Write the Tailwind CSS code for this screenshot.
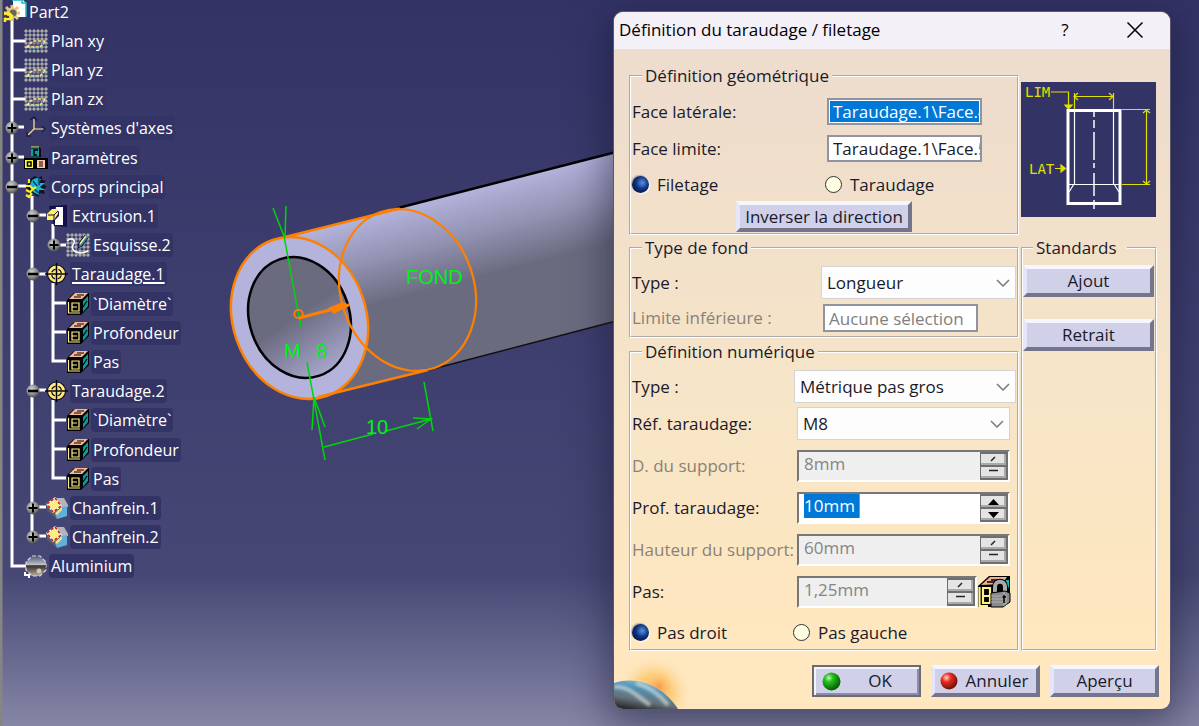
<!DOCTYPE html>
<html lang="fr">
<head>
<meta charset="utf-8">
<title>Part2 - Définition du taraudage / filetage</title>
<script src="https://cdn.jsdelivr.net/npm/@tailwindcss/browser@4"></script>
</head>
<body class="relative h-screen min-h-[726px] overflow-hidden bg-linear-to-b from-[#333366] from-0% via-[#474775] via-79% to-[#8686a6] to-100% font-['Open_Sans',sans-serif] text-[16px] text-[#1a1a2a]">

<!-- Icon definitions -->
<svg class="absolute size-0" aria-hidden="true">
  <defs>
    <radialGradient id="gNode" cx=".4" cy=".35" r=".7"><stop offset="0" stop-color="#d0d0d0"/><stop offset=".6" stop-color="#8a8a8a"/><stop offset="1" stop-color="#444"/></radialGradient>
    <radialGradient id="gGreen" cx=".35" cy=".3" r=".75"><stop offset="0" stop-color="#c8f5b8"/><stop offset=".3" stop-color="#24c41c"/><stop offset="1" stop-color="#035003"/></radialGradient>
    <radialGradient id="gRed" cx=".35" cy=".3" r=".75"><stop offset="0" stop-color="#ffd8c8"/><stop offset=".35" stop-color="#ee2a20"/><stop offset="1" stop-color="#5c1008"/></radialGradient>
    <linearGradient id="gAlu" x1="0" y1="0" x2="0" y2="1"><stop offset="0" stop-color="#55556a"/><stop offset=".3" stop-color="#9aa0b8"/><stop offset=".5" stop-color="#d8d4b8"/><stop offset=".55" stop-color="#4a3c34"/><stop offset="1" stop-color="#b8b0a0"/></linearGradient>
    <pattern id="pDots" width="4" height="4" patternUnits="userSpaceOnUse"><circle cx="2" cy="2" r="1.500" fill="#b4b4b4"/><path d="M0 2H4M2 0V4" stroke="#a0a0a0" stroke-width=".6"/></pattern>
  </defs>
  <symbol id="plus" viewBox="0 0 14 14"><circle cx="7" cy="7" r="6.500" fill="url(#gNode)"/><path d="M2.500 7H11.500M7 2.500V11.500" stroke="#000" stroke-width="2"/></symbol>
  <symbol id="minus" viewBox="0 0 14 14"><circle cx="7" cy="7" r="6.500" fill="url(#gNode)"/><path d="M2 7H12" stroke="#000" stroke-width="2.500"/></symbol>
  <symbol id="plane" viewBox="0 0 24 24"><rect width="24" height="24" fill="url(#pDots)"/><path d="M3 18L9 12H22L16 18Z" fill="#5a5a78" fill-opacity=".5" stroke="#ffe98a" stroke-width="1.500" stroke-dasharray="3 1.500"/><path d="M6 19H17L22 13" stroke="#4bbcae" stroke-dasharray="3 2" fill="none"/></symbol>
  <symbol id="axis" viewBox="0 0 24 24"><path d="M10 3V13L4 19M10 13H21" stroke="#ffe98a" stroke-width="1.200" fill="none"/><path d="M6 4L10 1L13 5M18 10L21 13L18 16M3 16L3 20L7 20" stroke="#1c1c50" stroke-width="1.500" fill="none"/></symbol>
  <symbol id="params" viewBox="0 0 24 24"><path d="M7 1H15L17 3V11H7Z" fill="#000"/><rect x="7" y="2.500" width="8" height="8" fill="#129ba0"/><path d="M14 4H10V9H13" stroke="#000" stroke-width="1.500" fill="none"/><path d="M7 1H15" stroke="#ffea50"/><rect y="12" width="12" height="11" fill="#000"/><rect x="1" y="14" width="8" height="8" fill="#ff3"/><path d="M3.500 16H7V20H3.500Z" stroke="#000" stroke-width="1.500" fill="none"/><rect x="12" y="12" width="12" height="11" fill="#000"/><rect x="13" y="14" width="8" height="8" fill="#ffc8ac"/><path d="M15 16H19M15 18H19M15 20H19" stroke="#000" stroke-width="1.200"/></symbol>
  <symbol id="body" viewBox="0 0 24 24"><path d="M11 1L14 3L18 1L18 5L22 6L19 9L23 12L19 14L21 19L16 18L14 22L10 19L5 21L5 15L2 12L5 8L6 4Z" fill="#10141e"/><path d="M8 5L12 3L17 4L15 8L21 8L16 12L21 15L15 15L15 20L9 17L6 10Z" fill="#18b4cc"/><path d="M9 6L13 11M15 4V10M9 13L15 18" stroke="#0a3c70" stroke-width="1.500"/><path d="M5 8V4M2 11L6 11L9 14L6 17L2 15M9 14L12 12M8 18L5 22L2 20" stroke="#ffee20" stroke-width="2.200" fill="none"/></symbol>
  <symbol id="part" viewBox="0 0 24 24"><path d="M10 0H20L23 3V17H10Z" fill="#fff"/><path d="M9 0H19V3H23V17" stroke="#14bcc8" stroke-width="1.500" fill="none"/><circle cx="9" cy="13" r="5.500" fill="#e4c882"/><path d="M9 5V21M1 13H17M3 7L15 19M15 7L3 19" stroke="#e4c882" stroke-width="3"/><circle cx="10" cy="13" r="3.500" fill="#68685a"/><path d="M1 14L6 13L9 16L7 19H2V22" stroke="#ffee20" stroke-width="2.500" fill="none"/><path d="M3 17L6 17" stroke="#10141e" stroke-width="1.500"/></symbol>
  <symbol id="extrude" viewBox="0 0 24 24"><path d="M4 2L22 1V23L9 22Z" fill="#15104c"/><path d="M11 3H18V21H10V16L14 12V7L10 9Z" fill="#fff"/><path d="M3 9L7 5H13V10L9 16H2V10Z" fill="#ffef62"/><path d="M3 11H9L13 7M9 11V16" stroke="#15104c" fill="none"/></symbol>
  <symbol id="sketch" viewBox="0 0 24 24"><rect width="24" height="24" fill="url(#pDots)"/><path d="M1 8C7 3 10 8 7 12C4 17 12 23 22 18" stroke="#fff" stroke-width="1.500" fill="none"/><path d="M19 2L13 10L12 15L16 13L22 5" fill="#238ca0" stroke="#15104c"/><path d="M20 3L14 11" stroke="#ffe96a" stroke-width="1.500"/></symbol>
  <symbol id="thread" viewBox="0 0 24 24"><circle cx="11.500" cy="12" r="9.500" fill="#0c0c20"/><circle cx="11.500" cy="12" r="8.500" fill="#ffe980"/><circle cx="11.500" cy="12" r="5" fill="none" stroke="#111" stroke-width="1.300" stroke-dasharray="5 2.850" stroke-dashoffset="-1.400"/><path d="M11.500 1V23M0 12H23" stroke="#050510" stroke-width="1.500"/></symbol>
  <symbol id="param" viewBox="0 0 24 24"><path d="M1 8L8 1H23V15L15 23H1Z" fill="#000"/><path d="M3 7L9 1H22L16 7Z" fill="#f7b795"/><path d="M8 5H15M11 3H18" stroke="#000"/><path d="M17 9L22 4V14L17 20Z" fill="#0a9a9c"/><path d="M17 15L21 9" stroke="#000" stroke-width="1.200"/><path d="M2.500 10V21H14M6 11H13V19H6ZM6 15H11" stroke="#fff08a" stroke-width="1.200" fill="none"/></symbol>
  <symbol id="chamfer" viewBox="0 0 24 24"><path d="M1 8L11 1L22 10V20L12 23L2 15Z" fill="#5b5b66"/><path d="M11 2L19 2L23 9V11L17 12Z" fill="#b4b4ba"/><path d="M2 8L10 2L16 10L8 16Z" fill="#ffef80" stroke="#fff" stroke-width="1.500"/><path d="M2 8L10 2L16 10L8 16Z" fill="none" stroke="#c02020" stroke-width="1.500" stroke-dasharray="3 2"/><path d="M10 18L17 11L22 10V20L12 23Z" fill="#5eb0de"/><path d="M10 17L17 11V14L12 19Z" fill="#ffe070"/></symbol>
  <symbol id="alu" viewBox="0 0 24 24"><path d="M8 2H16L22 8V16L16 22H8L2 16V8Z" fill="url(#gAlu)" stroke="#d8d8e0" stroke-width="1.200" stroke-dasharray="4 2"/><path d="M2 12H22" stroke="#26262e" stroke-width="1.500"/><circle cx="15" cy="17" r="2.500" fill="#d0c8b8"/><path d="M1 18V21H5V24" stroke="#fff" stroke-width="2" fill="none"/></symbol>
  <symbol id="spinOff" viewBox="0 0 28 28"><path d="M0 0H28V28H0Z" fill="#6f6f6f"/><path d="M1 2H25V13H1ZM1 15H25V26H1Z" fill="#e4e4e4"/><path d="M1 12H25V2M1 25H25V15" stroke="#aaa" fill="none" stroke-width="2"/><path d="M11 9L15 5M9 18.500H18" stroke="#222" stroke-width="1.500"/></symbol>
  <symbol id="spinOn" viewBox="0 0 28 28"><path d="M0 0H28V28H0Z" fill="#6f6f6f"/><path d="M1 2H25V13H1ZM1 15H25V26H1Z" fill="#e4e4e4"/><path d="M1 12H25V2M1 25H25V15" stroke="#aaa" fill="none" stroke-width="2"/><path d="M8 11L13.500 5L19 11ZM8 18L13.500 24L19 18Z" fill="#000"/></symbol>
  <symbol id="chev" viewBox="0 0 14 8"><path d="M1 1L7 7L13 1" stroke="#7a7a7a" stroke-width="1.500" fill="none"/></symbol>
</svg>

<!-- 3D view -->
<svg class="absolute left-0 top-0" width="1199" height="726" viewBox="0 0 1199 726" fill="none" font-family="Liberation Sans, sans-serif" font-size="20">
  <defs>
    <linearGradient id="gTube" gradientUnits="userSpaceOnUse" x1="400" y1="208" x2="422" y2="292"><stop offset="0" stop-color="#b3b3dc"/><stop offset=".5" stop-color="#9292b2"/><stop offset="1" stop-color="#6b6b80"/></linearGradient>
    <linearGradient id="gHole" gradientUnits="userSpaceOnUse" x1="290" y1="318" x2="308" y2="385"><stop offset="0" stop-color="#6b6b80"/><stop offset="1" stop-color="#acacd4"/></linearGradient>
  </defs>
  <path d="M0 0V726" stroke="#858585" stroke-width="5"/>
  <path d="M289 237L400 208L620 151V320L428 370L313 399Z" fill="url(#gTube)"/>
  <path d="M398 208L620 151" stroke="#000" stroke-width="2.500"/>
  <path d="M425 371L620 320" stroke="#111" stroke-width="1.500"/>
  <ellipse cx="299.500" cy="318" rx="66.600" ry="82.500" transform="rotate(-19 299.500 318)" fill="#b3b3dc" stroke="#ff8000" stroke-width="2.500"/>
  <ellipse cx="299.500" cy="317.500" rx="50" ry="61.500" transform="rotate(-19 299.500 317.500)" fill="url(#gHole)" stroke="#000" stroke-width="2.500"/>
  <ellipse cx="407.500" cy="290" rx="66.600" ry="82.500" transform="rotate(-19 407.500 290)" stroke="#ff8000" stroke-width="2.200"/>
  <path d="M285 237L400 208.500M318 397L428 370" stroke="#ff8000" stroke-width="2.500"/>
  <g stroke="#00d40c" stroke-width="1.500">
    <path d="M273 208L284 236M286 206L285 237M284 236L301 327" />
    <path d="M307 362L325 460M314 397L312 430M314 397L325 427M324 447L373 434M386 431L431 419M424 382L433 431M413 418L431 419L417 429"/>
  </g>
  <circle cx="298.500" cy="314" r="4.200" stroke="#ff8000" stroke-width="1.800"/>
  <path d="M299 318L349 305" stroke="#ff8000" stroke-width="3"/>
  <path d="M328 308L343 302L350 305L334 314Z" fill="#ff8000"/>
  <g fill="#00f018">
    <text x="406" y="284">FOND</text><text x="284" y="358">M</text><text x="316" y="358">8</text><text x="366" y="434">10</text>
  </g>
  <!-- Tree branches -->
  <path d="M12 16V566H26M12 41H26M12 70H26M12 99H26M12 127H24M12 157H24M12 186H26M32 196V536M32 215H46M32 274H46M32 390H46M32 507H46M32 536H46M53 224V245H66M53 283V361H66M53 303H66M53 332H66M53 400V478H66M53 420H66M53 449H66" stroke="#fff" stroke-width="3"/>
</svg>

<!-- Specification tree -->
<nav class="relative -mt-[3px] h-[584px] w-fit text-[16px] text-white" aria-label="Arbre">
  <ul class="grid h-full grid-rows-20 items-center">
    <li class="flex items-center pl-[3px]"><svg class="size-6"><use href="#part"/></svg><span class="rounded bg-[#333366] px-0.5 leading-6">Part2</span></li>
    <li class="flex items-center pl-6"><svg class="mr-px size-6"><use href="#plane"/></svg><span class="rounded bg-[#333366] px-0.5 leading-6">Plan xy</span></li>
    <li class="flex items-center pl-6"><svg class="mr-px size-6"><use href="#plane"/></svg><span class="rounded bg-[#333366] px-0.5 leading-6">Plan yz</span></li>
    <li class="flex items-center pl-6"><svg class="mr-px size-6"><use href="#plane"/></svg><span class="rounded bg-[#333366] px-0.5 leading-6">Plan zx</span></li>
    <li class="flex items-center pl-[5px]"><button class="mr-[5px]" aria-label="Développer"><svg class="size-[14px]"><use href="#plus"/></svg></button><svg class="mr-px size-6"><use href="#axis"/></svg><span class="rounded bg-[#333366] px-0.5 leading-6">Systèmes d'axes</span></li>
    <li class="flex items-center pl-[5px]"><button class="mr-[5px]" aria-label="Développer"><svg class="size-[14px]"><use href="#plus"/></svg></button><svg class="mr-px size-6"><use href="#params"/></svg><span class="rounded bg-[#333366] px-0.5 leading-6">Paramètres</span></li>
    <li class="flex items-center pl-[5px]"><button class="mr-[5px]" aria-label="Réduire"><svg class="size-[14px]"><use href="#minus"/></svg></button><svg class="mr-px size-6"><use href="#body"/></svg><span class="rounded bg-[#333366] px-0.5 leading-6">Corps principal</span></li>
    <li class="flex items-center pl-[26px]"><button class="mr-[5px]" aria-label="Réduire"><svg class="size-[14px]"><use href="#minus"/></svg></button><svg class="mr-px size-6"><use href="#extrude"/></svg><span class="rounded bg-[#333366] px-0.5 leading-6">Extrusion.1</span></li>
    <li class="flex items-center pl-[47px]"><button class="mr-[5px]" aria-label="Développer"><svg class="size-[14px]"><use href="#plus"/></svg></button><svg class="mr-px size-6"><use href="#sketch"/></svg><span class="rounded bg-[#333366] px-0.5 leading-6">Esquisse.2</span></li>
    <li class="flex items-center pl-[26px]"><button class="mr-[5px]" aria-label="Réduire"><svg class="size-[14px]"><use href="#minus"/></svg></button><svg class="mr-px size-6"><use href="#thread"/></svg><span class="rounded bg-[#333366] px-0.5 leading-6 underline decoration-2 underline-offset-2">Taraudage.1</span></li>
    <li class="flex items-center pl-[66px]"><svg class="mr-px size-6"><use href="#param"/></svg><span class="rounded bg-[#333366] px-0.5 leading-6">`Diamètre`</span></li>
    <li class="flex items-center pl-[66px]"><svg class="mr-px size-6"><use href="#param"/></svg><span class="rounded bg-[#333366] px-0.5 leading-6">Profondeur</span></li>
    <li class="flex items-center pl-[66px]"><svg class="mr-px size-6"><use href="#param"/></svg><span class="rounded bg-[#333366] px-0.5 leading-6">Pas</span></li>
    <li class="flex items-center pl-[26px]"><button class="mr-[5px]" aria-label="Réduire"><svg class="size-[14px]"><use href="#minus"/></svg></button><svg class="mr-px size-6"><use href="#thread"/></svg><span class="rounded bg-[#333366] px-0.5 leading-6">Taraudage.2</span></li>
    <li class="flex items-center pl-[66px]"><svg class="mr-px size-6"><use href="#param"/></svg><span class="rounded bg-[#333366] px-0.5 leading-6">`Diamètre`</span></li>
    <li class="flex items-center pl-[66px]"><svg class="mr-px size-6"><use href="#param"/></svg><span class="rounded bg-[#333366] px-0.5 leading-6">Profondeur</span></li>
    <li class="flex items-center pl-[66px]"><svg class="mr-px size-6"><use href="#param"/></svg><span class="rounded bg-[#333366] px-0.5 leading-6">Pas</span></li>
    <li class="flex items-center pl-[26px]"><button class="mr-[5px]" aria-label="Développer"><svg class="size-[14px]"><use href="#plus"/></svg></button><svg class="mr-px size-6"><use href="#chamfer"/></svg><span class="rounded bg-[#333366] px-0.5 leading-6">Chanfrein.1</span></li>
    <li class="flex items-center pl-[26px]"><button class="mr-[5px]" aria-label="Développer"><svg class="size-[14px]"><use href="#plus"/></svg></button><svg class="mr-px size-6"><use href="#chamfer"/></svg><span class="rounded bg-[#333366] px-0.5 leading-6">Chanfrein.2</span></li>
    <li class="flex items-center pl-6"><svg class="mr-px size-6"><use href="#alu"/></svg><span class="rounded bg-[#333366] px-0.5 leading-6">Aluminium</span></li>
  </ul>
</nav>

<!-- Thread definition dialog -->
<section role="dialog" aria-labelledby="dlgTitle" class="absolute left-[614px] top-3 w-[556px] overflow-hidden rounded-[9px] bg-linear-to-b from-[#eedccd] from-10% via-[#f6e5c7] via-55% to-[#ffe7bf] to-90% text-[17px] shadow-[0_0_0_1px_#5a5870,0_12px_40px_6px_rgba(20,20,50,0.5)]">
  <header class="flex h-[37px] items-center bg-[#f4f0f7] pb-0.5 pl-[5px] text-black">
    <h1 id="dlgTitle" class="flex-1">Définition du taraudage / filetage</h1>
    <button class="mr-[52px] w-5 text-center" aria-label="Aide">?</button>
    <button class="mr-[27px]" aria-label="Fermer"><svg class="size-4" viewBox="0 0 16 16"><path d="M.5.5L15.500 15.500M15.500.5L.5 15.500" stroke="#000" stroke-width="1.500"/></svg></button>
  </header>

  <form class="relative pb-3" onsubmit="return false">
    <div class="grid grid-cols-[1fr_136px] gap-x-0.5 pl-[15px] pr-[13px] pt-[15px]">
      <fieldset class="mb-[1px] h-[171px] min-w-0 border-2 border-white [border-style:groove]">
        <legend class="ml-[11px] px-[3px] leading-6">Définition géométrique</legend>
        <div class="flex flex-col gap-[10px] pt-[10px] pl-[1px]">
          <div class="flex h-[27px] items-center justify-between pr-[35px]">
            <label for="lat">Face latérale:</label>
            <input id="lat" value="Taraudage.1\Face.4" class="h-[27px] w-[155px] border-2 border-[#9094a0] bg-[#0078d7] pl-1 text-white shadow-[inset_0_0_0_1px_#fff] outline-none">
          </div>
          <div class="flex h-[27px] items-center justify-between pr-[35px]">
            <label for="lim">Face limite:</label>
            <input id="lim" value="Taraudage.1\Face.5" class="h-[27px] w-[155px] border-2 border-[#9094a0] bg-white pl-1 outline-none">
          </div>
          <div class="grid h-[25px] grid-cols-[193px_1fr] items-center">
            <label class="flex items-center gap-[8px]"><input type="radio" name="kind" checked class="size-[17px] appearance-none rounded-full bg-radial-[at_60%_40%] from-[#4f86d8] from-5% via-[#0c2f7c] via-45% to-[#061846] to-80% shadow-[-1px_-1px_1px_#b8a890,1px_1px_1px_#fff]">Filetage</label>
            <label class="flex items-center gap-[8px]"><input type="radio" name="kind" class="size-[17px] appearance-none rounded-full border border-[#333] bg-[#ffffe1]">Taraudage</label>
          </div>
        </div>
        <button class="mx-auto mt-1 block h-[31px] w-[176px] border-4 border-t-[#f6f6ff] border-r-[#74748c] border-b-[#74748c] border-l-[#e6e6fa] bg-[#d0d0e8] leading-5">Inverser la direction</button>
      </fieldset>

      <svg class="mt-[18px] size-[135px]" viewBox="0 0 135 135" fill="none" role="img" aria-label="Schéma du taraudage">
        <rect width="135" height="135" fill="#333366"/>
        <g stroke="#e0e000" stroke-width="1.200">
          <path d="M30 10H47.500V24M53.500 27V11M92.500 27V11M54 14.500H92M57 11L53 14.500L57 18M88 11L92 14.500L88 18M101 27.500H129M101 102.500H129M125.500 28V102M122 31L125.500 28L129 31M122 99L125.500 102L129 99M34 86.500H42"/>
          <path d="M44 23H51L47.500 27ZM40 83V90L44.500 86.500Z" fill="#e0e000"/>
        </g>
        <g fill="#e0e000" font-family="DejaVu Sans Mono, monospace" font-size="14"><text x="4" y="15">LIM</text><text x="8" y="92">LAT</text></g>
        <rect x="47" y="28.500" width="52" height="93" stroke="#fff" stroke-width="3"/>
        <path d="M53.500 28V102M92.500 28V102M48 102.500H98M48 110L53 102M98 110L93 102" stroke="#fff" stroke-width="1.200"/>
        <path d="M73 29V35M73 38V46M73 50V78M73 81V86M73 91V114M73 118V127" stroke="#fff" stroke-width="1.500"/>
      </svg>

      <div class="flex flex-col gap-[2px]">
        <fieldset class="h-[102px] min-w-0 border-2 border-white [border-style:groove]">
          <legend class="ml-[11px] px-[3px] leading-6">Type de fond</legend>
          <div class="flex flex-col gap-[5px] pt-[6px] pl-[1px]">
            <div class="flex items-center justify-between pr-[1px]">
              <label for="bottom">Type :</label>
              <div class="relative"><select id="bottom" class="h-[33px] w-[195px] appearance-none border border-[#d4d4d4] bg-[#fdfdfd] pl-[5px]"><option>Longueur</option></select><svg class="pointer-events-none absolute right-[6px] top-[13px] h-2 w-[14px]"><use href="#chev"/></svg></div>
            </div>
            <div class="flex items-center justify-between pr-[39px] text-[#8b8178]">
              <label for="inf">Limite inférieure :</label>
              <input id="inf" value="Aucune sélection" readonly class="h-7 w-[155px] border-2 border-[#9094a0] bg-white pl-1 text-[#808080] outline-none">
            </div>
          </div>
        </fieldset>

        <fieldset class="h-[311px] min-w-0 border-2 border-white [border-style:groove]">
          <legend class="ml-[11px] px-[3px] leading-6">Définition numérique</legend>
          <div class="flex flex-col pt-[6px] pl-[1px]">
            <div class="flex h-[33px] items-center justify-between pr-[1px]">
              <label for="std">Type :</label>
              <div class="relative"><select id="std" class="h-[33px] w-[222px] appearance-none border border-[#d4d4d4] bg-[#fdfdfd] pl-[5px]"><option>Métrique pas gros</option></select><svg class="pointer-events-none absolute right-[6px] top-[13px] h-2 w-[14px]"><use href="#chev"/></svg></div>
            </div>
            <div class="mt-1 flex h-[33px] items-center justify-between pr-[7px]">
              <label for="ref">Réf. taraudage:</label>
              <div class="relative"><select id="ref" class="h-[33px] w-[213px] appearance-none border border-[#d4d4d4] bg-[#fdfdfd] pl-[5px]"><option>M8</option></select><svg class="pointer-events-none absolute right-[6px] top-[13px] h-2 w-[14px]"><use href="#chev"/></svg></div>
            </div>
            <div class="mt-[10px] flex h-8 items-center justify-between pr-[7px] text-[#8b8178]">
              <label for="dia">D. du support:</label>
              <div class="flex h-8 w-[213px] border-2 border-t-[#777] border-r-white border-b-white border-l-[#777] bg-[#efefef] pl-[5px]"><input id="dia" value="8mm" disabled class="h-6 min-w-0 flex-1 text-[#858585]"><svg class="size-7"><use href="#spinOff"/></svg></div>
            </div>
            <div class="mt-[10px] flex h-8 items-center justify-between pr-[7px]">
              <label for="depth">Prof. taraudage:</label>
              <div class="flex h-8 w-[213px] justify-between border-2 border-t-[#777] border-r-white border-b-white border-l-[#777] bg-white pl-[5px]"><input id="depth" value="10mm" class="h-6 w-[56px] border-r border-[#ff8000] bg-[#0078d7] text-white outline-none"><svg class="size-7"><use href="#spinOn"/></svg></div>
            </div>
            <div class="mt-[10px] flex h-8 items-center justify-between pr-[7px] text-[#8b8178]">
              <label for="height" class="whitespace-nowrap">Hauteur du support:</label>
              <div class="flex h-8 w-[213px] border-2 border-t-[#777] border-r-white border-b-white border-l-[#777] bg-[#efefef] pl-[5px]"><input id="height" value="60mm" disabled class="h-6 min-w-0 flex-1 text-[#858585]"><svg class="size-7"><use href="#spinOff"/></svg></div>
            </div>
            <div class="mt-[10px] flex h-8 items-center pr-[6px]">
              <label for="pitch" class="flex-1">Pas:</label>
              <div class="flex h-8 w-[180px] border-2 border-t-[#777] border-r-white border-b-white border-l-[#777] bg-[#efefef] pl-[5px]"><input id="pitch" value="1,25mm" disabled class="h-6 min-w-0 flex-1 text-[#858585]"><svg class="size-7"><use href="#spinOff"/></svg></div>
              <svg class="ml-[1px] h-8 w-[33px]" viewBox="0 0 33 32"><path d="M0 10L11 0H32V23L25 31H0Z" fill="#000"/><path d="M3 9L12 1H29L24 8Z" fill="#f0b090"/><path d="M9 6H17M13 4H20" stroke="#000" stroke-width="1.500"/><path d="M28 4H31V12L28 9Z" fill="#16b0b0"/><path d="M1.500 11V30H10M5 12H12V27H5ZM5 20H11" stroke="#fff08a" stroke-width="2.200" fill="none"/><path d="M17 18V11C17 4 27 4 27 11V18" stroke="#000" stroke-width="6" fill="none"/><path d="M17 18V11C17 4 27 4 27 11V18" stroke="#aaa" stroke-width="4" fill="none"/><path d="M13 17L27 15L32 17V26L25 31H13Z" fill="#8a8a8a" stroke="#000"/><path d="M13 20H26M13 23H26M13 26H26M28 18V29M26 16V30" stroke="#bbb" stroke-width=".8"/><path d="M26 19V27M24.500 21H28" stroke="#000" stroke-width="1.500"/></svg>
            </div>
            <div class="mt-3 grid h-6 grid-cols-[161px_1fr] items-center">
              <label class="flex items-center gap-[8px]"><input type="radio" name="hand" checked class="size-[17px] appearance-none rounded-full bg-radial-[at_60%_40%] from-[#4f86d8] from-5% via-[#0c2f7c] via-45% to-[#061846] to-80% shadow-[-1px_-1px_1px_#b8a890,1px_1px_1px_#fff]">Pas droit</label>
              <label class="flex items-center gap-[8px]"><input type="radio" name="hand" class="size-[17px] appearance-none rounded-full border border-[#333] bg-[#ffffe1]">Pas gauche</label>
            </div>
          </div>
        </fieldset>
      </div>

      <fieldset class="min-w-0 border-2 border-white [border-style:groove]">
        <legend class="ml-[10px] pr-[10px] pl-[3px] leading-6">Standards</legend>
        <div class="flex flex-col gap-[22px] pt-[5px] pr-[1px]">
          <button class="h-8 w-full border-4 border-t-[#f6f6ff] border-r-[#74748c] border-b-[#74748c] border-l-[#e6e6fa] bg-[#d0d0e8] leading-5">Ajout</button>
          <button class="h-8 w-full border-4 border-t-[#f6f6ff] border-r-[#74748c] border-b-[#74748c] border-l-[#e6e6fa] bg-[#d0d0e8] leading-5">Retrait</button>
        </div>
      </fieldset>
    </div>

    <svg class="absolute bottom-0 left-0 h-[60px] w-20" viewBox="0 0 80 60">
      <defs>
        <radialGradient id="gGlow" gradientUnits="userSpaceOnUse" cx="40" cy="44" r="38"><stop offset="0" stop-color="#fbb860"/><stop offset=".5" stop-color="#fdcf80"/><stop offset="1" stop-color="#ffe7bf" stop-opacity="0"/></radialGradient>
        <radialGradient id="gSun" gradientUnits="userSpaceOnUse" cx="45" cy="38" r="13"><stop offset="0" stop-color="#f99a4a"/><stop offset="1" stop-color="#fcbf68" stop-opacity="0"/></radialGradient>
        <linearGradient id="gEarth" x1=".7" y1="0" x2=".3" y2="1"><stop offset="0" stop-color="#8cc8e4"/><stop offset=".35" stop-color="#4f90b4"/><stop offset=".7" stop-color="#687078"/><stop offset="1" stop-color="#2a2e34"/></linearGradient>
        <filter id="soft"><feGaussianBlur stdDeviation="1.500"/></filter>
      </defs>
      <rect width="80" height="60" fill="url(#gGlow)"/>
      <rect width="80" height="60" fill="url(#gSun)"/>
      <path d="M0 34C24 26 50 38 64 60H0Z" fill="url(#gEarth)"/>
      <path d="M0 38C14 36 24 48 36 56M22 34C36 38 46 46 54 56" stroke="#d4e0dc" stroke-opacity=".7" stroke-width="4" fill="none" filter="url(#soft)"/>
    </svg>

    <div class="mt-[14px] flex justify-end gap-[10px] pr-[11px]">
      <button class="flex h-8 w-[109px] items-center border-2 border-[#6c6c70] bg-[#d0d0e8] pl-2 leading-5 shadow-[inset_2px_2px_0_#f4f4ff,inset_-2px_-2px_0_#8c8ca8]"><svg class="size-[19px]" viewBox="0 0 19 19"><circle cx="9.500" cy="9.500" r="9" fill="url(#gGreen)"/></svg><span class="flex-1 text-center">OK</span></button>
      <button class="flex h-8 w-[109px] items-center border-4 border-t-[#f6f6ff] border-r-[#74748c] border-b-[#74748c] border-l-[#e6e6fa] bg-[#d0d0e8] pl-[5px] leading-5"><svg class="size-[18px]" viewBox="0 0 19 19"><circle cx="9.500" cy="9.500" r="9" fill="url(#gRed)"/></svg><span class="flex-1 text-center">Annuler</span></button>
      <button class="h-8 w-[109px] border-4 border-t-[#f6f6ff] border-r-[#74748c] border-b-[#74748c] border-l-[#e6e6fa] bg-[#d0d0e8] leading-5">Aperçu</button>
    </div>
  </form>
</section>
</body>
</html>
